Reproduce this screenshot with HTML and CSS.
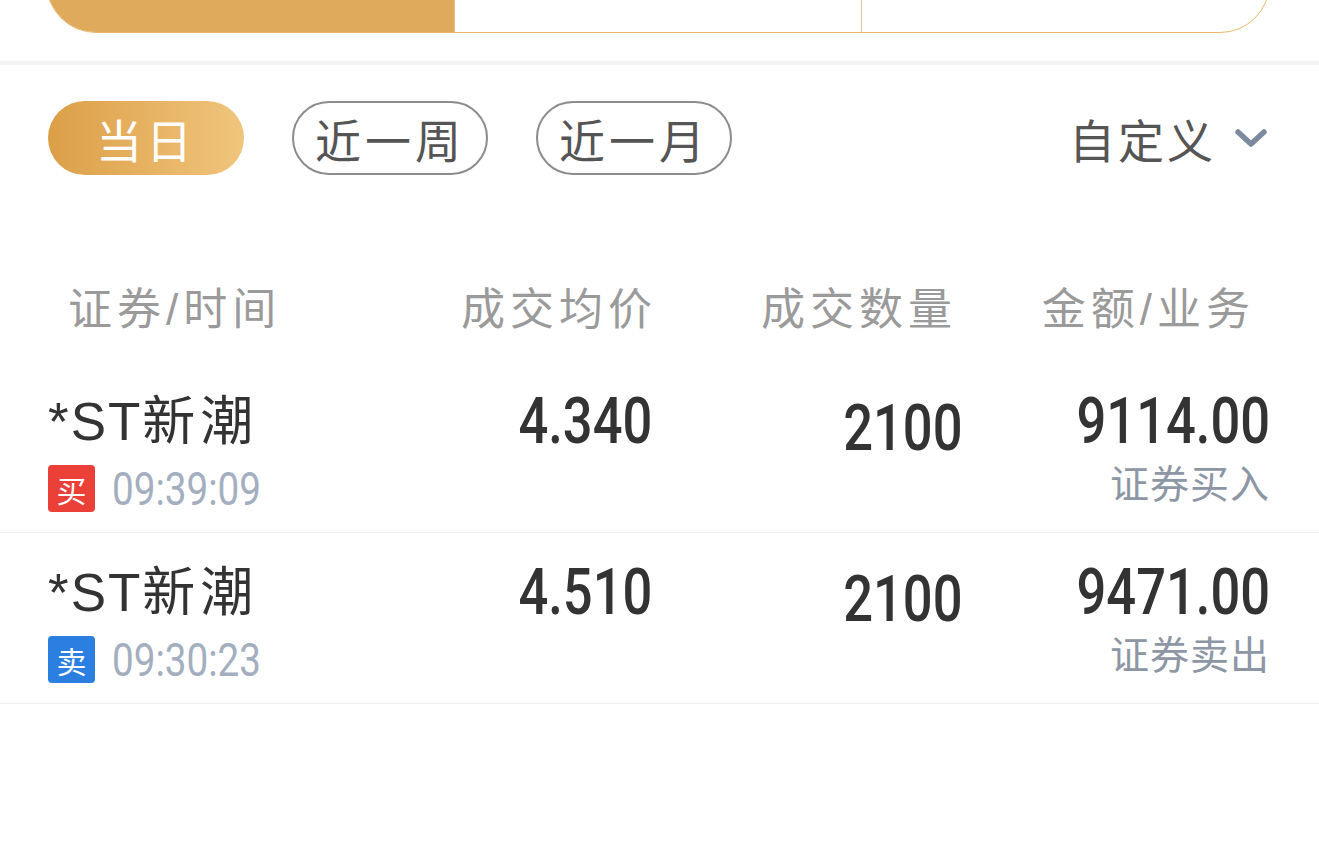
FILE: index.html
```html
<!DOCTYPE html>
<html lang="zh-CN">
<head>
  <meta charset="UTF-8">
  <meta name="viewport" content="width=device-width, initial-scale=1.0">
  <title>成交查询</title>
  <link rel="stylesheet" href="styles.css">
</head>
<body>

<!-- Top tabs (scrolled partly out of view) -->
<div class="tabs-wrap">
  <div class="tabs">
    <div class="tab active">当日成交</div>
    <div class="tab">历史成交</div>
    <div class="tab">交割单</div>
  </div>
</div>
<div class="band"></div>

<!-- Date range filters -->
<div class="filters">
  <span class="pill active">当日</span>
  <span class="pill">近一周</span>
  <span class="pill">近一月</span>
  <span class="custom">
    自定义
    <svg width="34" height="22" viewBox="0 0 34 22"><polyline points="4,5 17,17 30,5" fill="none" stroke="#7c8b9d" stroke-width="5.5" stroke-linecap="round" stroke-linejoin="round"/></svg>
  </span>
</div>

<!-- Trade list -->
<div class="grid head">
  <div class="h1">证券/时间</div>
  <div class="num-col">成交均价</div>
  <div class="num-col h3">成交数量</div>
  <div class="num-col h4">金额/业务</div>
</div>

<div class="grid row">
  <div>
    <div class="name">*ST<span class="cn">新潮</span></div>
    <div class="meta"><span class="badge buy">买</span><span class="time">09:39:09</span></div>
  </div>
  <div class="num-col"><div class="value">4.340</div></div>
  <div class="num-col"><div class="value qty">2100</div></div>
  <div class="num-col">
    <div class="value">9114.00</div>
    <div class="biz">证券买入</div>
  </div>
</div>

<div class="grid row">
  <div>
    <div class="name">*ST<span class="cn">新潮</span></div>
    <div class="meta"><span class="badge sell">卖</span><span class="time">09:30:23</span></div>
  </div>
  <div class="num-col"><div class="value">4.510</div></div>
  <div class="num-col"><div class="value qty">2100</div></div>
  <div class="num-col">
    <div class="value">9471.00</div>
    <div class="biz">证券卖出</div>
  </div>
</div>

</body>
</html>
```

FILE: styles.css
```css
body {
  margin: 0;
  padding: 0;
  background: #fff;
  color: #333;
  font-family: "Liberation Sans", "Noto Sans CJK SC", sans-serif;
  overflow: hidden;
}

/* tabs */
.tabs-wrap {
  padding: 0 49px 0 46px;
}
.tabs {
  display: flex;
  height: 100px;
  margin-top: -67px;
  border: 1.5px solid #e8b872;
  border-radius: 50px;
  overflow: hidden;
  box-sizing: border-box;
}
.tab {
  flex: 1;
  display: flex;
  align-items: flex-end;
  justify-content: center;
  padding-bottom: 28px;
  font-size: 44px;
  line-height: 50px;
  color: #555;
  letter-spacing: 4px;
  border-left: 1.5px solid #e8c48c;
}
.tab:first-child {
  border-left: none;
}
.tab.active {
  background: #e0aa5c;
  color: #fff;
}
.band {
  height: 4px;
  margin-top: 28px;
  background: #f4f4f4;
}

/* filters */
.filters {
  display: flex;
  align-items: center;
  gap: 48px;
  margin-top: 36px;
  padding: 0 51px 0 48px;
}
.pill {
  width: 196px;
  height: 74px;
  box-sizing: border-box;
  border: 2px solid #8c8c8c;
  border-radius: 37px;
  display: flex;
  align-items: center;
  justify-content: center;
  font-size: 46px;
  letter-spacing: 4px;
  color: #555;
}
.pill.active {
  border: none;
  color: #fff;
  background: linear-gradient(90deg, #dc9f48, #f0c57c);
}
.custom {
  margin-left: auto;
  display: flex;
  align-items: center;
  gap: 18px;
  font-size: 46px;
  letter-spacing: 3px;
  color: #555;
}

/* list */
.grid {
  display: grid;
  grid-template-columns: 300px 304px 310px 308px;
  padding: 0 49px 0 48px;
}
.num-col {
  text-align: right;
}
.head {
  margin-top: 110px;
  padding-bottom: 27px;
  font-size: 44px;
  line-height: 50px;
  letter-spacing: 5px;
  color: #9a9a9a;
}
.head .h1 {
  padding-left: 20px;
}
.head .num-col {
  margin-right: -5px;
}
.head .h3 {
  padding-right: 10px;
}
.head .h4 {
  padding-right: 20px;
}
.row {
  padding-top: 30px;
  padding-bottom: 20px;
  border-bottom: 1px solid #eee;
}
.name {
  font-size: 53px;
  line-height: 60px;
  letter-spacing: 2px;
  color: #333;
}
.name .cn {
  letter-spacing: 5px;
}
.meta {
  display: flex;
  align-items: center;
  gap: 17px;
  margin-top: 13px;
  height: 47px;
}
.badge {
  width: 47px;
  height: 47px;
  border-radius: 4px;
  display: flex;
  align-items: center;
  justify-content: center;
  font-size: 30px;
  color: #fff;
  font-family: "Noto Sans CJK SC", sans-serif;
}
.badge.buy {
  background: #ea4038;
}
.badge.sell {
  background: #2b7fe0;
}
/* condensed digits, like the DIN face of the app */
.time {
  display: inline-block;
  font-family: Roboto, sans-serif;
  font-size: 46px;
  color: #a3afbf;
  transform: scaleX(0.84);
  transform-origin: left center;
}
.value {
  display: inline-block;
  font-family: Roboto, sans-serif;
  font-weight: 500;
  font-size: 64px;
  line-height: 60px;
  color: #333;
  transform: scaleX(0.82);
  transform-origin: right center;
}
.value.qty {
  padding-top: 7px;
}
.biz {
  margin-top: 8px;
  font-size: 39px;
  line-height: 50px;
  letter-spacing: 1px;
  color: #8c96a4;
}
```
